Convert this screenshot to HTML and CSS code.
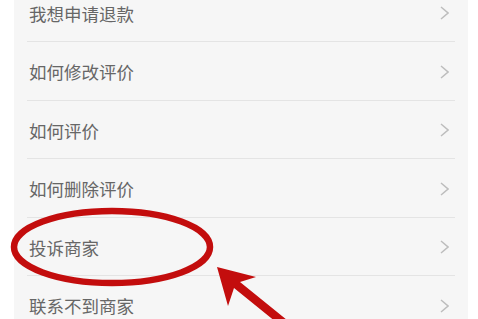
FILE: index.html
```html
<!DOCTYPE html>
<html lang="zh-CN">
<head>
<meta charset="utf-8">
<link rel="stylesheet" href="styles.css">
</head>
<body>
<div class="page">
  <div class="panel">
    <ul class="list">
      <li class="row"><span class="label">我想申请退款</span><svg class="chev" viewBox="0 0 9 14"><path d="M1 1 L8 7 L1 13"/></svg></li>
      <li class="row"><span class="label">如何修改评价</span><svg class="chev" viewBox="0 0 9 14"><path d="M1 1 L8 7 L1 13"/></svg></li>
      <li class="row"><span class="label">如何评价</span><svg class="chev" viewBox="0 0 9 14"><path d="M1 1 L8 7 L1 13"/></svg></li>
      <li class="row"><span class="label">如何删除评价</span><svg class="chev" viewBox="0 0 9 14"><path d="M1 1 L8 7 L1 13"/></svg></li>
      <li class="row"><span class="label">投诉商家</span><svg class="chev" viewBox="0 0 9 14"><path d="M1 1 L8 7 L1 13"/></svg></li>
      <li class="row"><span class="label">联系不到商家</span><svg class="chev" viewBox="0 0 9 14"><path d="M1 1 L8 7 L1 13"/></svg></li>
    </ul>
  </div>
  <svg class="mark" viewBox="0 0 478 319" width="478" height="319">
    <ellipse cx="112" cy="247" rx="98" ry="36" fill="none" stroke="#c30d0d" stroke-width="6.5"/>
    <polygon points="217,267 256,277 240,282 303,333 297,339 234,288 228,306" fill="#c30d0d"/>
  </svg>
</div>
</body>
</html>
```

FILE: styles.css
```css
html, body {
  margin: 0;
  padding: 0;
  background: #ffffff;
}
body {
  font-family: "Noto Sans CJK SC", "Noto Sans", sans-serif;
}
.page {
  position: relative;
  width: 478px;
  height: 319px;
  overflow: hidden;
  padding: 0 10px 0 14px;
  box-sizing: border-box;
}
.panel {
  background: #f6f6f6;
  height: 100%;
  overflow: hidden;
}
.list {
  list-style: none;
  margin: -16.5px 13px 0 13px;
  padding: 0;
}
.row {
  border-bottom: 1px solid #e4e4e4;
  display: flex;
  align-items: center;
  justify-content: space-between;
  padding: 2px 6px 0 2px;
  box-sizing: content-box;
  height: 55.5px;
}
.label {
  font-size: 17.5px;
  color: #666666;
  line-height: 1;
}
.chev {
  width: 9px;
  height: 14px;
  fill: none;
  stroke: #bdbdbd;
  stroke-width: 1.5;
}
.mark {
  position: absolute;
  top: 0;
  left: 0;
  pointer-events: none;
}
```
